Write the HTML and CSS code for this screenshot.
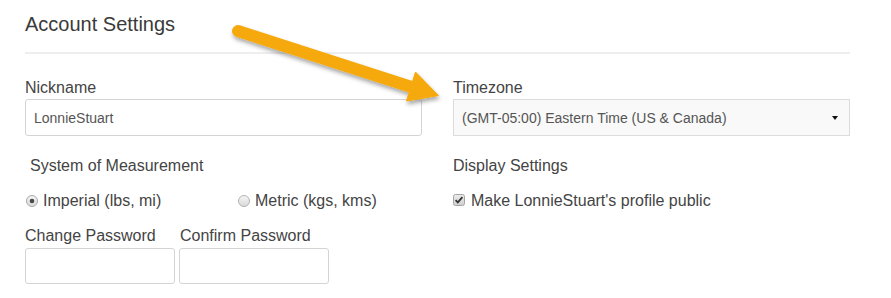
FILE: index.html
```html
<!DOCTYPE html>
<html lang="en">
<head>
<meta charset="utf-8">
<title>Account Settings</title>
<link rel="stylesheet" href="styles.css">
</head>
<body>
<div class="page">
  <h2 class="title">Account Settings</h2>
  <div class="rule"></div>

  <div class="row row-top">
    <div class="field">
      <label class="label">Nickname</label>
      <input class="input" type="text" value="LonnieStuart">
    </div>
    <div class="field">
      <label class="label">Timezone</label>
      <div class="select">
        <span class="select-text">(GMT-05:00) Eastern Time (US &amp; Canada)</span>
        <span class="caret"></span>
      </div>
    </div>
  </div>

  <div class="row row-mid">
    <div class="field">
      <div class="label indent">System of Measurement</div>
      <div class="options">
        <label class="option option-first">
          <svg class="radio" width="12" height="12" viewBox="0 0 12 12">
            <defs>
              <linearGradient id="rg1" x1="0" y1="0" x2="0" y2="1">
                <stop offset="0" stop-color="#f6f6f6"/>
                <stop offset="1" stop-color="#d9d9d9"/>
              </linearGradient>
            </defs>
            <circle cx="6" cy="6" r="5.5" fill="url(#rg1)" stroke="#a9a9a9" stroke-width="1"/>
            <circle cx="6" cy="6" r="2.3" fill="#4a4a4a"/>
          </svg>
          <span>Imperial (lbs, mi)</span>
        </label>
        <label class="option">
          <svg class="radio" width="12" height="12" viewBox="0 0 12 12">
            <defs>
              <linearGradient id="rg2" x1="0" y1="0" x2="0" y2="1">
                <stop offset="0" stop-color="#f6f6f6"/>
                <stop offset="1" stop-color="#d9d9d9"/>
              </linearGradient>
            </defs>
            <circle cx="6" cy="6" r="5.5" fill="url(#rg2)" stroke="#b3b3b3" stroke-width="1"/>
          </svg>
          <span>Metric (kgs, kms)</span>
        </label>
      </div>
    </div>
    <div class="field">
      <div class="label">Display Settings</div>
      <div class="options">
        <label class="option">
          <svg class="check" width="12" height="12" viewBox="0 0 12 12">
            <defs>
              <linearGradient id="cg" x1="0" y1="0" x2="0" y2="1">
                <stop offset="0" stop-color="#ececec"/>
                <stop offset="1" stop-color="#d0d0d0"/>
              </linearGradient>
            </defs>
            <rect x="0.5" y="0.5" width="11" height="11" rx="2" fill="url(#cg)" stroke="#a4a4a4"/>
            <path d="M2.6 6.2 L4.8 8.4 L9.4 3.2" fill="none" stroke="#333" stroke-width="1.8"/>
          </svg>
          <span>Make LonnieStuart's profile public</span>
        </label>
      </div>
    </div>
  </div>

  <div class="passwords">
    <div class="pw-field">
      <label class="label">Change Password</label>
      <input class="input pw" type="password">
    </div>
    <div class="pw-field">
      <label class="label pw-label">Confirm Password</label>
      <input class="input pw" type="password">
    </div>
  </div>
</div>

<svg class="arrow" width="891" height="298" viewBox="0 0 891 298">
  <defs>
    <filter id="shadow" x="-10%" y="-30%" width="120%" height="160%">
      <feDropShadow dx="1" dy="3" stdDeviation="2" flood-color="#000" flood-opacity="0.35"/>
    </filter>
  </defs>
  <g filter="url(#shadow)" fill="#f6a90d" stroke="#f6a90d">
    <line x1="238" y1="31" x2="413" y2="87.5" stroke-width="12" stroke-linecap="round"/>
    <polygon points="415.5,72 438.5,95.5 406.5,101" stroke-width="1" stroke-linejoin="round"/>
  </g>
</svg>
</body>
</html>
```

FILE: styles.css
```css
html, body {
  margin: 0;
  padding: 0;
  background: #ffffff;
}

body {
  font-family: "Liberation Sans", Arial, Helvetica, sans-serif;
  color: #444;
  position: relative;
  width: 891px;
  height: 298px;
  overflow: hidden;
}

.page {
  padding: 10px 41px 0 25px;
}

.title {
  margin: 0;
  font-size: 20px;
  font-weight: normal;
  line-height: 28px;
  color: #3a3a3a;
}

.rule {
  margin-top: 14px;
  border-top: 2px solid #eeeeee;
}

.row {
  display: grid;
  grid-template-columns: 397px 397px;
  column-gap: 31px;
}

.row-top {
  margin-top: 24px;
}

.row-mid {
  margin-top: 20px;
}

.field {
  display: flex;
  flex-direction: column;
}

.label {
  display: block;
  font-size: 16px;
  line-height: 20px;
  margin-bottom: 1px;
  color: #444;
}

.indent {
  padding-left: 5px;
}

.input {
  box-sizing: border-box;
  height: 37px;
  width: 100%;
  margin: 0;
  border: 1px solid #d4d4d4;
  border-radius: 3px;
  padding: 0 8px;
  font-family: "Liberation Sans", Arial, sans-serif;
  font-size: 14px;
  color: #555;
  background: #fff;
  outline: none;
}

.select {
  box-sizing: border-box;
  height: 37px;
  border: 1px solid #dcdcdc;
  background: #f9f9f9;
  display: flex;
  align-items: center;
  justify-content: space-between;
  padding: 0 11px 0 8px;
  font-size: 14px;
  color: #555;
}

.caret {
  width: 0;
  height: 0;
  border-left: 3px solid transparent;
  border-right: 3px solid transparent;
  border-top: 4px solid #111;
}

.options {
  display: flex;
  margin-top: 14px;
}

.option {
  display: flex;
  align-items: center;
  font-size: 16px;
  line-height: 20px;
  color: #444;
}

.option-first {
  width: 212px;
}

.radio {
  margin: 0 5px 0 1px;
  flex: none;
}

.check {
  margin: -3px 6px 0 0;
  flex: none;
}

.passwords {
  display: flex;
  gap: 4px;
  margin-top: 15px;
}

.pw-field {
  display: flex;
  flex-direction: column;
  width: 150px;
}

.pw-label {
  padding-left: 1px;
}

.pw {
  height: 36px;
  margin-top: 1px;
}

.arrow {
  position: absolute;
  left: 0;
  top: 0;
  pointer-events: none;
}
```
